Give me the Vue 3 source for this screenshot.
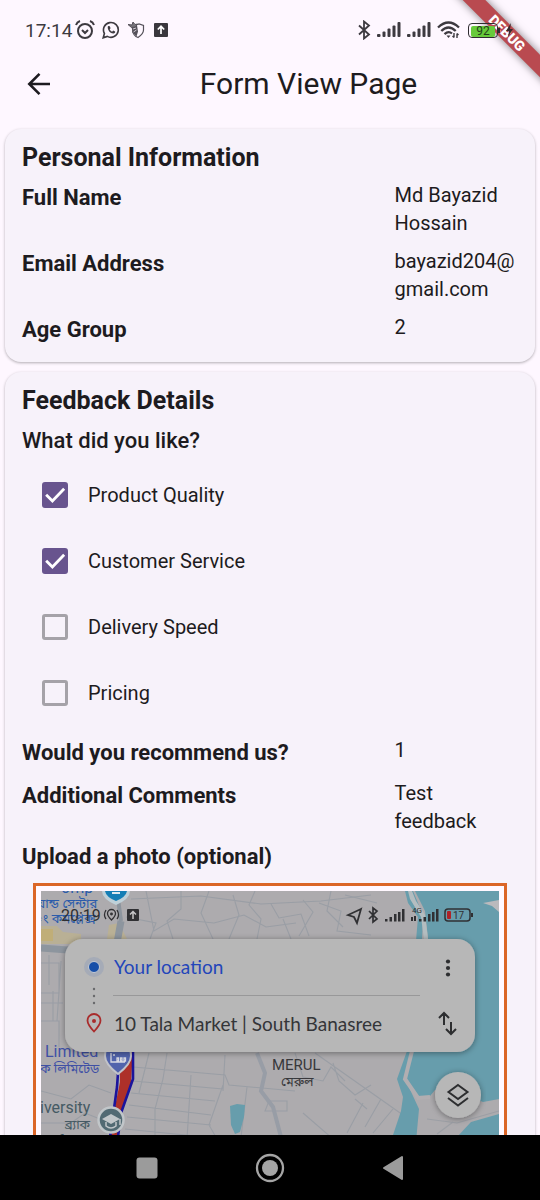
<script setup>
import { ref } from 'vue'

const personal = [
  { label: 'Full Name', value: 'Md Bayazid Hossain' },
  { label: 'Email Address', value: 'bayazid204@gmail.com' },
  { label: 'Age Group', value: '2' }
]

const likes = ref([
  { id: 'quality', label: 'Product Quality', checked: true },
  { id: 'service', label: 'Customer Service', checked: true },
  { id: 'delivery', label: 'Delivery Speed', checked: false },
  { id: 'pricing', label: 'Pricing', checked: false }
])

const answers = [
  { label: 'Would you recommend us?', value: '1' },
  { label: 'Additional Comments', value: 'Test feedback' }
]
</script>

<template>
  <div class="screen">
    <div class="ribbon-corner"><span class="ribbon">DEBUG</span></div>

    <div class="status">
      <div class="status-left">
        <span class="clock">17:14</span>
        <svg width="20" height="20" viewBox="0 0 20 20" fill="none" stroke="#3d3a40" stroke-width="2">
          <circle cx="10" cy="11" r="7" />
          <path d="M7 10l3 3 3-3" />
          <path d="M1 5q1-3 4-4M19 5q-1-3-4-4" stroke-width="2" />
        </svg>
        <svg class="gap-a" width="18" height="18" viewBox="0 0 18 18" fill="none" stroke="#3d3a40" stroke-width="1.6">
          <path d="M1.2 16.8l1.2-4.3a7.4 7.4 0 1 1 2.9 2.9z" />
          <path d="M6.3 5c-1.6 1 .2 7.600 5.500 7.500 1.500-.4 1.500-1.500 1.300-1.900l-1.900-1-1.100 1.100c-1-.4-2-1.400-2.400-2.400l.9-1-.8-2z" fill="#3d3a40" stroke="none" />
        </svg>
        <svg class="gap-a" width="18" height="18" viewBox="0 0 18 18" fill="none" stroke="#55515a" stroke-width="1.2">
          <path d="M9 4l3-1 4.500 1.500v4.500c0 3.500-2.500 5.500-5.500 7.500-3-1-5-3.500-5.500-7" />
          <path d="M4.500 5.500l5.500-1 1 6-1.500 5-4-4z" fill="#55515a" stroke="none" />
          <path d="M1 3.500l4 .5 1-3 2 2.500 2.500-.5-2 3-4 .5z" fill="#77737a" stroke-width="1" />
          <path d="M6 8l3-1M6.500 11l3-2" stroke="#cfc8d2" stroke-width="1" />
        </svg>
        <svg class="gap-b" width="14" height="14" viewBox="0 0 14 14">
          <rect width="14" height="14" rx="1" fill="#3a373d" />
          <path d="M7 11V3.500M3.800 6.500L7 3.300l3.200 3.200" fill="none" stroke="#fff" stroke-width="1.700" />
        </svg>
      </div>
      <div class="status-right">
        <svg width="14" height="20" viewBox="0 0 14 20" fill="none" stroke="#3d3a40" stroke-width="1.800">
          <path d="M2 5.500l10 9-5 4V1.500l5 4-10 9" />
        </svg>
        <svg v-for="n in 2" :key="n" width="24" height="16" viewBox="0 0 24 16" fill="#3d3a40">
          <rect x="0" y="12" width="3.500" height="3" rx="1" />
          <rect x="5.500" y="9.500" width="3" height="5.500" rx="1" />
          <rect x="10.500" y="6.500" width="3" height="8.500" rx="1" />
          <rect x="15.500" y="3.500" width="3" height="11.500" rx="1" />
          <rect x="20.500" y="0" width="3" height="15" rx="1" />
        </svg>
        <svg width="23" height="18" viewBox="0 0 23 18" fill="none" stroke="#3d3a40" stroke-width="2.300">
          <path d="M1 6.500Q11.500-3.500 22 6.500" />
          <path d="M4.300 10Q11.500 3 18.700 10" />
          <path d="M7.500 13.200Q11.500 9.500 15 12.500" />
          <path d="M9.500 14.500h4l-2 2.500z" fill="#3d3a40" stroke="none" />
          <path d="M17 12v4.500M15.500 15l1.500 1.500M20 17v-4.500M21.500 14L20 12.500" stroke-width="1.400" />
        </svg>
        <span class="battery"><span class="charge">92</span></span>
        <svg class="bolt" width="9" height="14" viewBox="0 0 9 14"><path d="M6 0L1 8h3l-1 6 5-8H5z" fill="#3a2a2e" /></svg>
      </div>
    </div>

    <header class="appbar">
      <button class="back" type="button" aria-label="Back">
        <svg width="24" height="24" viewBox="0 0 24 24" fill="none" stroke="#1d1b20" stroke-width="2.600">
          <path d="M23 12H2.500M12.500 1.800L2.300 12l10.200 10.200" />
        </svg>
      </button>
      <h1>Form View Page</h1>
    </header>

    <main class="content">
      <section class="card">
        <h2>Personal Information</h2>
        <dl class="rows">
          <div v-for="row in personal" :key="row.label" class="row">
            <dt>{{ row.label }}</dt>
            <dd>{{ row.value }}</dd>
          </div>
        </dl>
      </section>

      <section class="card">
        <h2>Feedback Details</h2>
        <h3 class="question">What did you like?</h3>
        <ul class="options">
          <li v-for="item in likes" :key="item.id">
            <span class="tick">
              <input :id="item.id" v-model="item.checked" type="checkbox" />
              <svg v-if="item.checked" viewBox="0 0 25 25" fill="none" stroke="#fff" stroke-width="2.700">
                <path d="M4 12.300l6 6L21.300 6.500" />
              </svg>
            </span>
            <label :for="item.id">{{ item.label }}</label>
          </li>
        </ul>
        <dl class="rows">
          <div v-for="row in answers" :key="row.label" class="row">
            <dt>{{ row.label }}</dt>
            <dd>{{ row.value }}</dd>
          </div>
        </dl>
        <h3 class="upload">Upload a photo (optional)</h3>
        <figure class="photo">
          <svg class="map" viewBox="0 0 458 300" role="img" aria-label="Map">
            <defs>
              <filter id="soft" x="-10%" y="-10%" width="120%" height="130%">
                <feDropShadow dx="0" dy="1" stdDeviation="3" flood-color="#000" flood-opacity="0.4" />
              </filter>
            </defs>
            <rect width="458" height="300" fill="#adabae" />

            <g fill="#b9b095">
              <path d="M0 35h16l6 6 18 2v10H0z" />
              <path d="M0 38h12v12H0z" fill="#c0ae78" />
              <path d="M68 34l10-2 8 16H66z" />
            </g>
            <g fill="none" stroke="#8d959e">
              <path d="M0 57l40 3M80 30l-4 22" stroke-width="7" />
              <path d="M76 0l4 30" stroke-width="4" />
            </g>
            <g fill="none" stroke="#9a9ea5" stroke-width="1.100">
              <path d="M90 8l70-3 60 8 60-3 50-6M105 0l8 40 20-12 40 4 30-8 22 12 30-4M85 26l30 6-6 16M140 0v18l-14 12 6 18M168 0l-8 22 12 26M192 4l6 20-10 24M214 0l-6 14 12 14-4 20" />
              <path d="M230 13l8 14 22-4 8 22M242 28l8 20M262 9l10 12-14 24M278 12l22 8-4 20 34 4M290 0l-4 20 16 16M304 4l32 8" />
              <path d="M0 72h18v30H0M8 64v30M20 70l-4 60M0 112h22M0 130h18v26M12 100v30" />
              <path d="M92 176l92 8 4 10 66 6M92 190l90 8M90 202l84 8M88 214l82 10M86 226l84 8M84 238l80 8M126 162l-4 26-8 30v30M184 164l-2 36M182 194l-14 40 8 14M150 184l-4 64M206 196l-6 50M108 162l-10 40" />
              <path d="M254 162l8 24 20 4 8-14 14 14M274 162l88 62M292 172l6 18 16 14 16-10M314 208l12 10M322 212l-16 30M340 208l-16 28M352 218l-20 24M262 222l30 26M228 210h18v10h-22z" />
              <path d="M0 200l30 8 18-14 22 8M0 232h30l14-10 20 8" />
            </g>
            <path d="M216 162l8 20-4 18 12 16 8 30" fill="none" stroke="#989da6" stroke-width="4" />

            <g fill="#679dac">
              <path d="M372 0H458V208L442 211 425 204 394 199 389 205 376 206 364 190 372 162 387 120V47L384 20 374 0z" />
              <path d="M364 0h8l10 24-1 26h-6l2-24-10-14z" />
              <path d="M366 160l-10 28 6 18-2 14-14 42h28l4-44-12-26 8-32z" />
              <path d="M416 246l14-15 28-8v80h-60z" />
              <path d="M189 215l7-2 8 1-1 12-4 15-5 2-4-9z" />
            </g>
            <path d="M371 0l4 10 9 14 3 24h-4l-3-22-11-18-2-8z" fill="#b4bdc0" />
            <path d="M371 160l-7 28 13 19 12-1" fill="none" stroke="#b1aeb1" stroke-width="4" />
            <path d="M442 12l16-3v12l-7-6z" fill="#bbbabd" />
            <path d="M386 228l30 4 42-12M396 243l16-12" fill="none" stroke="#9c9fa5" stroke-width="1.200" />

            <path d="M92 158l-2 35-10 28-4 34H66l13-64V158z" fill="#ad3029" />
            <path d="M92 158v30l-12 34-4 32M78 168l-2 28-8 58" fill="none" stroke="#1b149c" stroke-width="2.600" />

            <path d="M61 0h28q0 8-14 14Q61 8 61 0z" fill="#bfd0d8" />
            <path d="M64 0h22q-1 6-11 10Q65 6 64 0z" fill="#147eb5" />
            <path d="M71 2h8" stroke="#dbe9f0" stroke-width="2" />

            <g font-size="13" class="bn">
              <text x="-4" y="17" fill="#2b5cab">য়ান্ড সেন্টার</text>
              <text x="-5" y="32" fill="#2b5cab">ং কমপ্লেক্স</text>
              <text x="-1" y="182" fill="#3f50a5">ক লিমিটেড</text>
              <text x="24" y="238" fill="#455a64">ব্র্যাক</text>
              <text x="240" y="195" fill="#38383b">মেরুল</text>
            </g>
            <g font-size="16" class="latin">
              <text x="20" y="2" fill="#2b5cab">omp</text>
              <text x="4" y="166" fill="#3f50a5">Limited</text>
              <text x="-1" y="222" fill="#455a64">iversity</text>
              <text x="6" y="256" fill="#455a64">Of</text>
              <text x="231" y="179" font-size="15" fill="#38383b">MERUL</text>
            </g>

            <path d="M64 165q0-13 13-13t13 13q0 8-13 18Q64 173 64 165z" fill="#5264ac" stroke="#c2c3c9" stroke-width="2" />
            <path d="M70 162v9h14M72 164h2M76 167h1.500v3H76zM79.500 167h1.500v3h-1.500zM83 167h1.500v3H83z" fill="none" stroke="#d7d9e2" stroke-width="1.300" />
            <g>
              <circle cx="70" cy="229" r="12.500" fill="#526a73" stroke="#c1c6c9" stroke-width="2.500" />
              <path d="M61 228l9-5 9 5-9 5z" fill="#c1c6c9" />
              <path d="M65 231v4q5 4 10 0v-4M79 228v6" fill="none" stroke="#c1c6c9" stroke-width="1.500" />
            </g>

            <text x="20" y="30" font-size="16" fill="#2f2f31" class="latin">20:19</text>
            <g fill="none" stroke="#303033" stroke-width="1.300">
              <path d="M70.500 29q-4-4-4-6.500a4 4 0 0 1 8 0q0 2.500-4 6.500z" />
              <circle cx="70.500" cy="23" r="0.800" />
              <path d="M65 19q-3 5 0 9M76 19q3 5 0 9" />
            </g>
            <rect x="86" y="18" width="12" height="12" rx="1" fill="#303033" />
            <path d="M92 28v-7M89 23.500l3-3 3 3" fill="none" stroke="#c7c6c8" stroke-width="1.500" />
            <g fill="none" stroke="#303033" stroke-width="1.800">
              <path d="M320 18l-13 6 6 2 3 6z" />
              <path d="M328 20l8 8-4 3V17l4 3-8 8" stroke-width="1.700" />
            </g>
            <g fill="#303033">
              <path d="M344 28h2.500v2.500H344zM348.500 26h2.500v4.500h-2.500zM353 23h2.500v7.500H353zM357 21h2.500v9.500H357zM361 18h2.500v12.500H361z" />
              <path d="M378 28h2.500v2.500H378zM382.500 26h2.500v4.500h-2.500zM387 23h2.500v7.500H387zM391 21h2.500v9.500H391zM395 18h2.500v12.500H395zM370 26h2v4h-2zM373 25h2v5h-2z" />
              <text x="371" y="22" font-size="8" class="latin">4G</text>
            </g>
            <rect x="404" y="18" width="25" height="12" rx="3" fill="none" stroke="#303033" stroke-width="1.500" />
            <rect x="406" y="20" width="4" height="8" rx="1" fill="#ae2328" />
            <path d="M431 22v4" stroke="#303033" stroke-width="2" />
            <text x="412" y="28" font-size="10" fill="#303033" class="latin">17</text>

            <rect x="24" y="48" width="410" height="113" rx="18" fill="#b7b7b7" filter="url(#soft)" />
            <circle cx="53" cy="76" r="10" fill="#a5abb7" />
            <circle cx="53" cy="76" r="5.500" fill="#174fa8" stroke="#c5cad3" stroke-width="1" />
            <g fill="#68696b"><circle cx="53" cy="98" r="1.200" /><circle cx="53" cy="105" r="1.200" /><circle cx="53" cy="112" r="1.200" /></g>
            <text x="73" y="83" font-size="19" fill="#2346ba" class="place">Your location</text>
            <path d="M72 104.500h307" stroke="#989899" />
            <path d="M53 140.500q-6.500-7-6.500-11a6.500 6.500 0 0 1 13 0q0 4-6.500 11z" fill="none" stroke="#a92c2c" stroke-width="1.800" />
            <circle cx="53" cy="130" r="2" fill="#a92c2c" />
            <text x="73" y="140" font-size="19" fill="#343538" class="place">10 Tala Market | South Banasree</text>
            <g fill="#2d2e30"><circle cx="407" cy="70.500" r="2.100" /><circle cx="407" cy="77" r="2.100" /><circle cx="407" cy="83.500" r="2.100" /></g>
            <path d="M403 134v-11M398 127l5-5 5 5M410 131v11M405 138l5 5 5-5" fill="none" stroke="#2d2e30" stroke-width="2" />

            <circle cx="417" cy="204" r="23" fill="#b7b7b7" filter="url(#soft)" />
            <path d="M417 194l9.500 7-9.500 7-9.500-7zM407 207l10 7.500 10-7.500" fill="none" stroke="#2d2e30" stroke-width="2" />
          </svg>
        </figure>
      </section>
    </main>

    <nav class="navbar">
      <button type="button" aria-label="Recent apps">
        <svg width="30" height="30" viewBox="0 0 30 30"><rect x="4.500" y="4.500" width="21" height="21" rx="3" fill="#9b9b9b" /></svg>
      </button>
      <button type="button" aria-label="Home">
        <svg width="30" height="30" viewBox="0 0 30 30"><circle cx="15" cy="15" r="13" fill="none" stroke="#a5a5a5" stroke-width="2.300" /><circle cx="15" cy="15" r="8" fill="#a5a5a5" /></svg>
      </button>
      <button type="button" aria-label="Back">
        <svg width="30" height="30" viewBox="0 0 30 30"><path d="M6 15l18-11v22z" fill="#9b9b9b" stroke="#9b9b9b" stroke-width="2" stroke-linejoin="round" /></svg>
      </button>
    </nav>
  </div>
</template>

<style>
body {
  margin: 0;
  background: #fef7ff;
}
</style>

<style scoped>
.screen {
  position: relative;
  display: flex;
  flex-direction: column;
  height: 100vh;
  overflow: hidden;
  background: #fef7ff;
  color: #1d1b20;
  font-family: Roboto, "Noto Sans", sans-serif;
}
h1, h2, h3, dl, dd, ul, figure {
  margin: 0;
  padding: 0;
}
button {
  border: 0;
  padding: 0;
  background: none;
  display: flex;
  align-items: center;
  justify-content: center;
}
.ribbon-corner {
  position: absolute;
  top: 0;
  right: 0;
  width: 110px;
  height: 110px;
  overflow: hidden;
}
.ribbon {
  position: absolute;
  top: 25px;
  left: -23px;
  width: 200px;
  height: 16px;
  transform: rotate(45deg);
  background: #b94a50;
  box-shadow: 0 0 8px rgba(0, 0, 0, 0.5);
  color: #fff;
  font-size: 14px;
  font-weight: 900;
  line-height: 16px;
  text-align: center;
}
.status {
  position: relative;
  flex: none;
  display: flex;
  justify-content: space-between;
  align-items: center;
  height: 42px;
  padding: 9px 26px 0 25px;
  color: #3d3a40;
}
.status-left, .status-right {
  display: flex;
  align-items: center;
}
.status-right {
  gap: 6px;
}
.clock {
  font-size: 19px;
  margin-right: 3px;
}
.gap-a {
  margin-left: 7px;
}
.gap-b {
  margin-left: 9px;
}
.battery {
  position: relative;
  box-sizing: border-box;
  width: 30px;
  height: 15px;
  margin-left: 2px;
  padding: 2px;
  border: 1px solid #2f2c31;
  border-radius: 4px;
}
.battery::after {
  content: "";
  position: absolute;
  right: -3px;
  top: 4px;
  width: 2px;
  height: 5px;
  background: #2f2c31;
}
.charge {
  display: block;
  border-radius: 2px;
  background: #67ca3b;
  color: #23401a;
  font-size: 12px;
  line-height: 11px;
  text-align: center;
}
.bolt {
  margin-left: 1px;
}
.appbar {
  position: relative;
  flex: none;
  display: flex;
  align-items: center;
  height: 65px;
}
.back {
  width: 77px;
  height: 65px;
}
.appbar h1 {
  flex: 1;
  font-size: 30px;
  font-weight: 400;
  text-align: center;
}
.content {
  flex: 1;
  min-height: 0;
  overflow: hidden;
  padding: 13px 5px 0;
}
.card {
  margin-bottom: 10px;
  padding: 16px 17px;
  border-radius: 16px;
  background: #f7f2fa;
  box-shadow: 0 1px 3px rgba(0, 0, 0, 0.3);
}
.card h2 {
  margin-bottom: 10px;
  font-size: 25px;
  font-weight: 700;
  line-height: 26px;
}
.rows {
  display: grid;
  gap: 10px;
}
.row {
  display: grid;
  grid-template-columns: 3fr 1fr;
  column-gap: 2px;
}
.row dt, .upload, .question {
  font-size: 22px;
  font-weight: 700;
  line-height: 33px;
}
.question {
  font-weight: 500;
}
.row dd {
  font-size: 20px;
  line-height: 28px;
  overflow-wrap: anywhere;
}
.options {
  padding: 5px 0 10px 20px;
  list-style: none;
}
.options li {
  display: flex;
  align-items: center;
  gap: 20px;
  height: 66px;
  font-size: 20px;
}
.tick {
  position: relative;
  width: 26px;
  height: 26px;
}
.tick input {
  appearance: none;
  display: block;
  box-sizing: border-box;
  width: 26px;
  height: 26px;
  margin: 0;
  border: 3px solid #a5a2a8;
  border-radius: 3px;
}
.tick input:checked {
  border-color: #68548e;
  background: #68548e;
}
.tick svg {
  position: absolute;
  inset: 0;
  pointer-events: none;
}
.upload {
  margin-top: 5px;
}
.photo {
  margin: 10px 11px;
  padding: 5px;
  border: 3px solid #db6627;
  background: #fff8ff;
}
.map {
  display: block;
  width: 100%;
  height: auto;
}
.latin {
  font-family: Roboto, sans-serif;
}
.place {
  font-family: Lato, Roboto, sans-serif;
}
.bn {
  font-family: "Noto Sans Bengali", "Noto Sans", sans-serif;
}
.navbar {
  position: relative;
  flex: none;
  display: grid;
  grid-template-columns: repeat(3, 1fr);
  height: 65px;
  padding: 0 85px;
  background: #000;
}
</style>
